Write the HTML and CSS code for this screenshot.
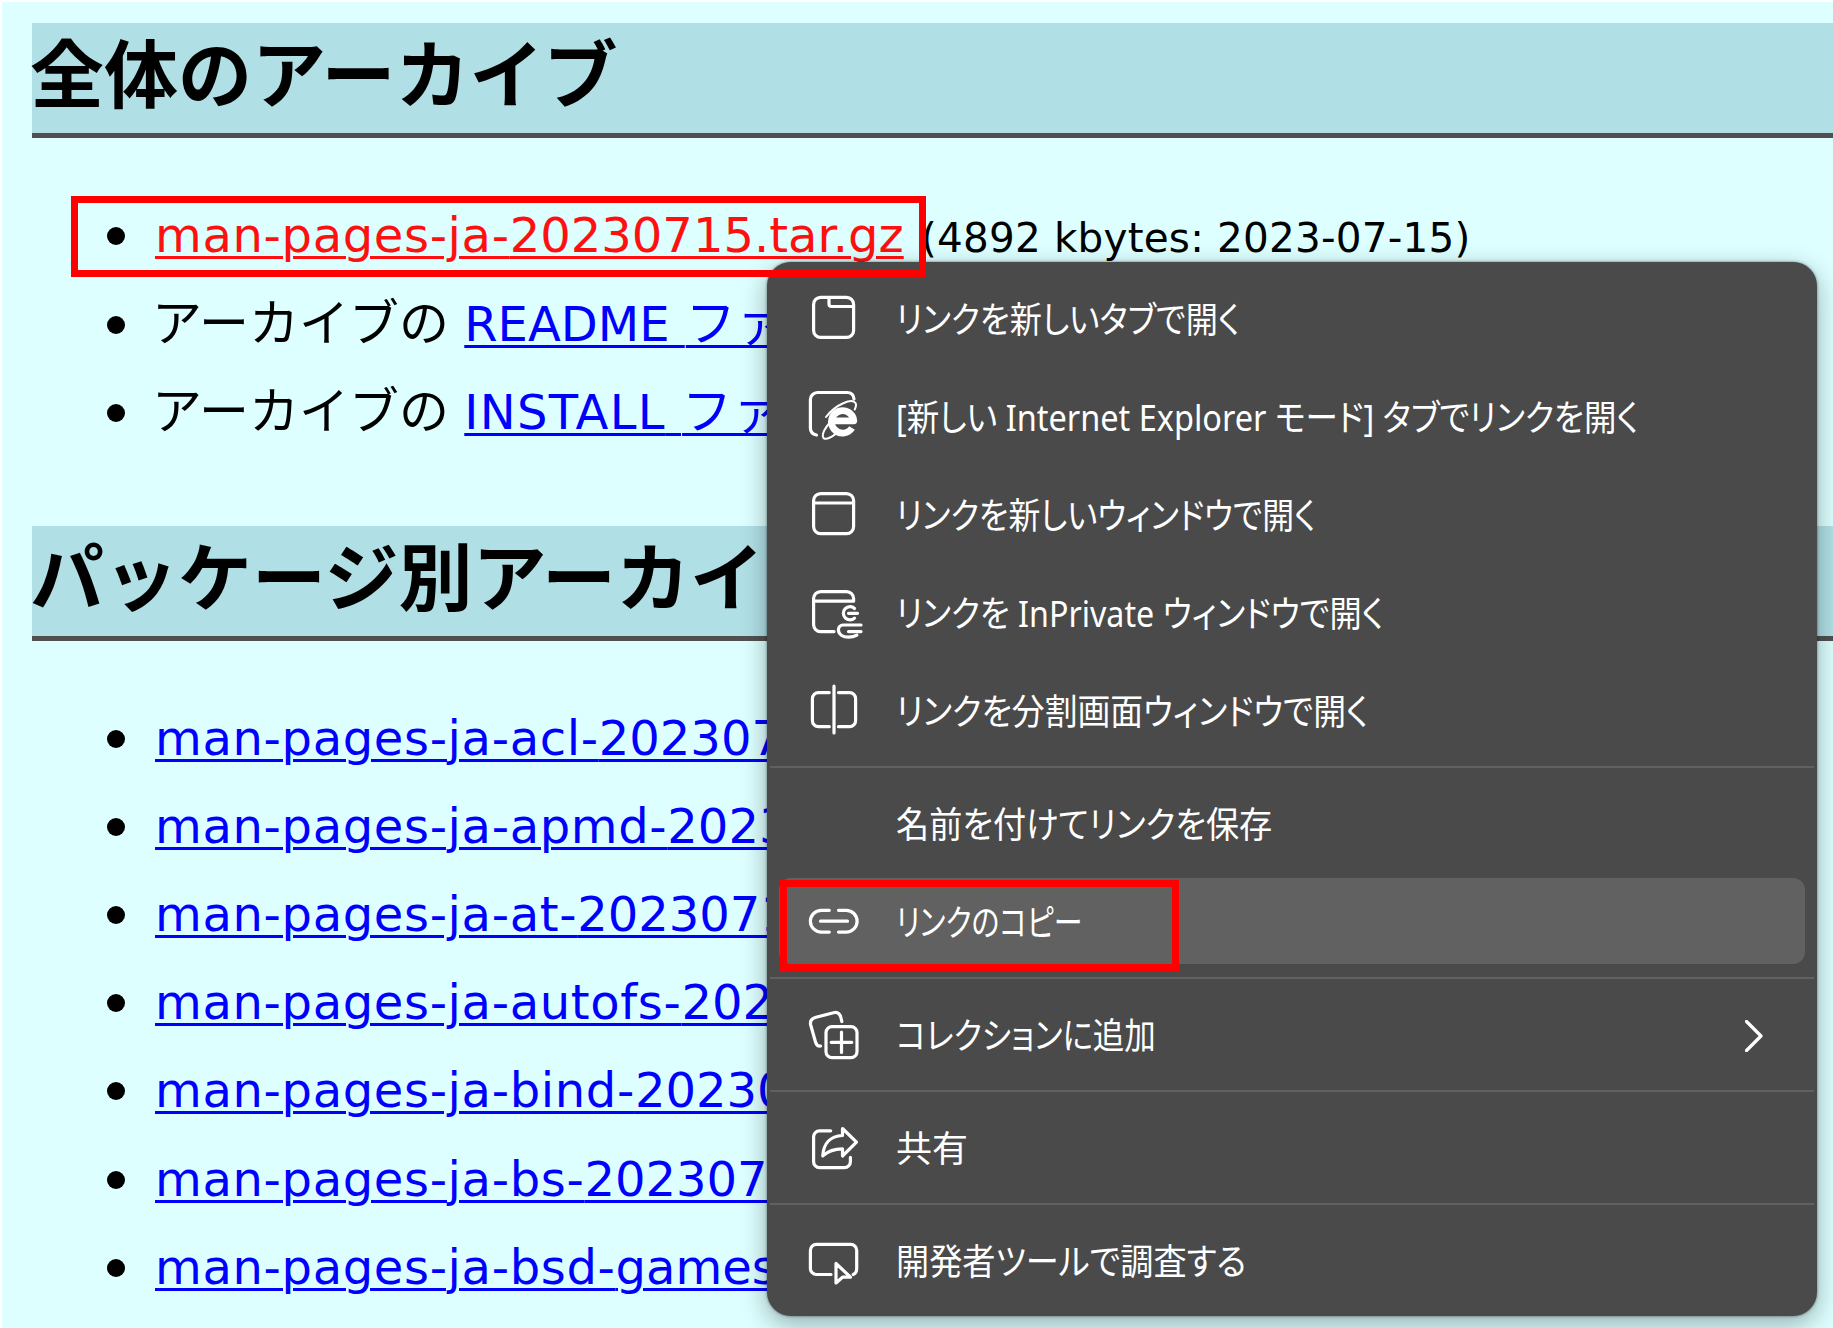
FILE: index.html
```html
<!DOCTYPE html>
<html lang="ja">
  <head>
    <meta charset="UTF-8" />
    <meta name="viewport" content="width=device-width, initial-scale=1.0" />
    <title>man-pages-ja</title>
    <link rel="stylesheet" href="styles.css">
  </head>
  <body>
    <div class="page">
      <h2>全体のアーカイブ</h2>
      <ul class="archive">
        <li><a class="active" href="#"><span class="name">man-pages-ja-</span>20230715.tar.gz</a> <small>(4892 kbytes: 2023-07-15)</small></li>
        <li><span class="kana lead">アーカイブの</span> <a href="#">README <span class="kana">ファ</span></a></li>
        <li><span class="kana lead">アーカイブの</span> <a href="#"><span class="install">INSTALL</span> <span class="kana">ファ</span></a></li>
      </ul>

      <h2>パッケージ別アーカイ</h2>
      <ul>
        <li><a href="#"><span class="name">man-pages-ja-acl-</span>202307</a></li>
        <li><a href="#"><span class="name">man-pages-ja-apmd-</span>2023</a></li>
        <li><a href="#"><span class="name">man-pages-ja-at-</span>2023071</a></li>
        <li><a href="#"><span class="name">man-pages-ja-autofs-</span>202</a></li>
        <li><a href="#"><span class="name">man-pages-ja-bind-</span>20230</a></li>
        <li><a href="#"><span class="name">man-pages-ja-bs-</span>202307</a></li>
        <li><a href="#"><span class="name">man-pages-ja-bsd-</span>games</a></li>
      </ul>
    </div>

    <div class="menu">
      <div class="item">
        <svg class="icon" viewBox="0 0 48 48"><rect x="3.6" y="3.4" width="40" height="40" rx="7" /><path d="M19 3.5V10a2.5 2.5 0 0 0 2.5 2.5H43.5" /></svg>
        <span class="label">リンクを新しいタブで開く</span>
      </div>
      <div class="item">
        <svg class="icon" viewBox="0 0 48 48">
          <path d="M6.5 43C2 42 .4 40 .4 36V7.5a7 7 0 0 1 7-7H37c4.5 0 6.6 2 7 6.5" />
          <path class="thick" d="M22 28.8H43.8A11.2 11.2 0 1 0 42 36" />
          <path class="thin" d="M16 25C26 12 42 6 45.5 11c1 1.8.5 4-.8 6.5M19.500 31C10 42 11 50 20 45.500c2-.8 3.500-2 5-3" />
        </svg>
        <span class="label w90">[新しい Internet Explorer モード] タブでリンクを開く</span>
      </div>
      <div class="item">
        <svg class="icon" viewBox="0 0 48 48"><rect x="3.6" y="3.6" width="40" height="40" rx="7" /><path d="M3.6 13H43.6" /></svg>
        <span class="label w88">リンクを新しいウィンドウで開く</span>
      </div>
      <div class="item">
        <svg class="icon" viewBox="0 0 48 48">
          <path d="M24 43.6H10.6a7 7 0 0 1-7-7V10.6a7 7 0 0 1 7-7H36.6a7 7 0 0 1 7 7V13.2H3.6" />
          <path d="M44.5 20.5a6.6 6.6 0 1 0 0 9.6M38.5 25.3H47.5M51 37H33a4.6 4.6 0 0 0-4.6 4.6c0 5 4.6 7.6 10 7.6 3.5 0 6-.6 8.5-2M38.5 43.6H51" />
        </svg>
        <span class="label">リンクを InPrivate ウィンドウで開く</span>
      </div>
      <div class="item">
        <svg class="icon" viewBox="0 0 48 48"><path d="M19.3 6.6H8.4a6 6 0 0 0-6 6V34.7a6 6 0 0 0 6 6H19.3M28.5 6.6H39.6a6 6 0 0 1 6 6V34.7a6 6 0 0 1-6 6H28.5M24 .2V47" /></svg>
        <span class="label w91">リンクを分割画面ウィンドウで開く</span>
      </div>
      <div class="separator"></div>
      <div class="item">
        <span class="icon"></span>
        <span class="label w92">名前を付けてリンクを保存</span>
      </div>
      <div class="item selected">
        <svg class="icon" viewBox="0 0 48 48"><path d="M19.3 13.3H11.3a10.9 10.9 0 0 0 0 21.8H19.3M28.5 13.3H36.2a10.9 10.9 0 0 1 0 21.8H28.5M10.5 24.2H37.5" /></svg>
        <span class="label w81">リンクのコピー</span>
      </div>
      <div class="separator"></div>
      <div class="item">
        <svg class="icon" viewBox="0 0 48 48">
          <rect x="16" y="16.7" width="31" height="31" rx="6" /><path d="M31.5 22V42.5M21.2 32.3H41.8" />
          <path d="M31.8 11.5L31 8C30 4 27.5 1.7 23.5 2.7L6 7.3C1.5 8.5-.3 11 .7 15L5.5 32C6.3 34.7 8 36.3 10.5 36" />
        </svg>
        <span class="label w87">コレクションに追加</span>
        <svg class="chevron" viewBox="0 0 18 32"><path d="M1.5 1.5L16 16L1.5 30.5" /></svg>
      </div>
      <div class="separator"></div>
      <div class="item">
        <svg class="icon" viewBox="0 0 48 48">
          <path d="M20.7 7.8H9.6a6 6 0 0 0-6 6V38.7a6 6 0 0 0 6 6H34.4a6 6 0 0 0 6-6V34.3" />
          <path d="M32.5 5.5L46.5 19.2L32.5 33V25.8C24 25.8 18 28 12.8 32.8C13.5 21 20 13 32.5 12.5Z" />
        </svg>
        <span class="label w100">共有</span>
      </div>
      <div class="separator"></div>
      <div class="item">
        <svg class="icon" viewBox="0 0 48 48">
          <path d="M21 38.5H6.4a6 6 0 0 1-6-6V14.3a6 6 0 0 1 6-6H40.7a6 6 0 0 1 6 6V32.5c0 3-1 5-3.5 6" />
          <path d="M26 27.5V47L32.5 41.2H40.5Z" />
        </svg>
        <span class="label w92">開発者ツールで調査する</span>
      </div>
    </div>

    <div class="mark mark-archive"></div>
    <div class="mark mark-copy"></div>
  </body>
</html>
```
FILE: styles.css
```css
* {
  margin: 0;
  padding: 0;
  box-sizing: border-box;
}

body {
  background: white;
  height: 1328px;
  overflow: hidden;
  position: relative;
}

.page {
  margin: 2px 0 0 2px;
  padding: 21px 0 0 30px;
  height: 1326px;
  overflow: hidden;
  background: #ddffff;
  color: black;
  font-family: "DejaVu Sans", "Noto Sans CJK JP", sans-serif;
  font-size: 48px;
  white-space: nowrap;
}

h2 {
  height: 115px;
  background: #b0e0e6;
  border-bottom: 5px solid #505050;
  font-family: "Noto Sans CJK JP", sans-serif;
  font-size: 74px;
  font-weight: bold;
  line-height: 93px;
  text-indent: -2px;
}

ul {
  padding: 53px 0 69px 122px;
  list-style: none;
}

li {
  height: 88.2px;
  line-height: 88.2px;
}

.archive li:first-child {
  height: 89.2px;
}

li::before {
  content: "";
  display: inline-block;
  width: 18px;
  height: 18px;
  margin: 0 30px 0 -47px;
  border-radius: 50%;
  background: black;
  vertical-align: 7px;
}

small {
  margin-left: 2px;
  font-size: 40.5px;
  letter-spacing: 0.2px;
}

.name {
  letter-spacing: 0.65px;
}

.install {
  letter-spacing: 1.3px;
}

.kana {
  margin-left: 1px;
  font-size: 50px;
}

.lead {
  margin-left: -3px;
}

a {
  color: #0000ff;
  text-decoration: underline;
  text-decoration-thickness: 3px;
  text-underline-offset: 4px;
}

a.active {
  color: #ff1010;
}

/* context menu */
.menu {
  position: absolute;
  left: 767px;
  top: 262px;
  width: 1050px;
  height: 1054px;
  padding: 7px 3px;
  border-radius: 24px;
  background: #4a4a4a;
  box-shadow: 0 8px 26px rgba(0, 0, 0, 0.32), 0 0 3px rgba(0, 0, 0, 0.5);
  color: white;
  font-family: "Noto Sans", "Noto Sans CJK JP", sans-serif;
  font-size: 36px;
  font-feature-settings: "palt";
}

.item {
  display: flex;
  align-items: center;
  height: 86px;
  margin: 6px 9px;
  padding: 0 42px 0 31px;
  border-radius: 12px;
}

.item + .item {
  margin-top: 12px;
}

.selected {
  background: #616161;
}

.icon {
  flex: none;
  width: 48px;
  height: 48px;
  margin-right: 38px;
  overflow: visible;
}

.icon,
.chevron {
  fill: none;
  stroke: white;
  stroke-width: 3.2;
  stroke-linecap: round;
  stroke-linejoin: round;
}

.icon .thick {
  stroke-width: 6.8;
  stroke-linecap: butt;
}

.icon .thin {
  stroke-width: 2;
}

.chevron {
  width: 18px;
  height: 32px;
  margin: 4px 0 0 auto;
}

.label {
  margin-top: -2px;
  white-space: nowrap;
  transform: scaleX(0.895);
  transform-origin: left;
}

.w81 {
  transform: scaleX(0.805);
}

.w87 {
  transform: scaleX(0.875);
}

.w88 {
  transform: scaleX(0.885);
}

.w90 {
  transform: scaleX(0.902);
}

.w91 {
  transform: scaleX(0.912);
}

.w92 {
  transform: scaleX(0.921);
}

.w100 {
  transform: none;
}

.separator {
  height: 2px;
  margin: 13px 0 12px;
  background: #616161;
}

/* red frames around the link and the copy command */
.mark {
  position: absolute;
  border: 7px solid #ff0000;
}

.mark-archive {
  left: 71px;
  top: 196px;
  width: 855px;
  height: 81px;
}

.mark-copy {
  left: 780px;
  top: 880px;
  width: 399px;
  height: 91px;
}
```
